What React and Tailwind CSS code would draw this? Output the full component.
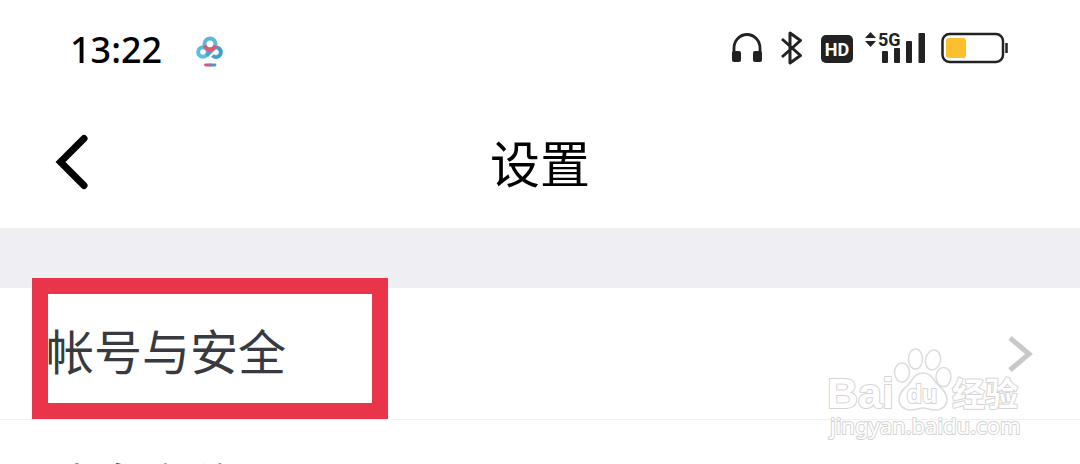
import React from "react";

const cjk = "font-['Roboto','Noto_Sans_CJK_SC',sans-serif]";

function CloudLogo() {
  return (
    <svg className="h-9 w-8" viewBox="0 0 32 36" fill="none" aria-hidden="true">
      <g strokeWidth="4">
        <circle cx="9" cy="20" r="4.800" stroke="#58bfdc" />
        <path d="M18.500 23.500a4.800 4.800 0 1 0 .500-7" stroke="#3c9fd0" />
        <path d="M12.500 23.500l7.500-7.500" stroke="#4ba3d2" />
        <circle cx="16" cy="12" r="5.500" stroke="#5cb9d6" />
        <path d="M10.700 13.500a5.500 5.500 0 0 0 10.600 0" stroke="#df5770" />
      </g>
      <path d="M11.500 33h5" stroke="#df5770" strokeWidth="2.800" strokeLinecap="round" />
      <path d="M16 33h5" stroke="#5593bd" strokeWidth="2.800" strokeLinecap="round" />
    </svg>
  );
}

function StatusIcons() {
  return (
    <svg className="h-10 w-[280px]" viewBox="730 28 280 40" fill="none" role="img" aria-label="HD 5G">
      <path d="M734 55v-7a13 13.500 0 0 1 26 0v7" stroke="#222" strokeWidth="2.800" />
      <rect x="732" y="51" width="9" height="11" rx="2" fill="#222" />
      <rect x="753" y="51" width="9" height="11" rx="2" fill="#222" />
      <path d="M782 39l18.500 16.500-10.500 7.500V33l10.500 7.500L782 57" stroke="#222" strokeWidth="3" strokeLinejoin="round" />
      <rect x="821" y="35" width="32" height="28" rx="5" fill="#222" />
      <text x="837" y="56" textAnchor="middle" fontFamily="Roboto, sans-serif" fontSize="18" fontWeight="700" fill="#fff">HD</text>
      <path d="M865 38l5.500-6 5.500 6zM865 41h11l-5.500 6z" fill="#222" />
      <text x="878" y="46" fontFamily="Roboto, sans-serif" fontSize="18" fontWeight="700" fill="#222">5G</text>
      <g fill="#222">
        <rect x="882" y="51" width="6" height="12" rx="1" />
        <rect x="894" y="48" width="6" height="15" rx="1" />
        <rect x="906" y="41" width="6" height="22" rx="1" />
        <rect x="918.500" y="33" width="6.500" height="30" rx="1" />
      </g>
      <rect x="942.500" y="34" width="60.500" height="28" rx="7" stroke="#222" strokeWidth="2.500" />
      <rect x="946" y="38" width="20" height="20" rx="3" fill="#fcc02f" />
      <path d="M1006.500 43v10" stroke="#222" strokeWidth="2.500" />
    </svg>
  );
}

function Watermark() {
  return (
    <svg className="pointer-events-none absolute top-[58px] right-[54px] h-[96px] w-[206px]" viewBox="820 346 206 96" role="img" aria-label="Baidu">
      <g fill="#fff" stroke="#dcdcdc" strokeWidth="1.500" strokeLinejoin="round">
        <ellipse cx="902" cy="372.500" rx="7.500" ry="9.500" />
        <ellipse cx="915.500" cy="359" rx="7" ry="10" />
        <ellipse cx="933" cy="360" rx="7.500" ry="10" transform="rotate(12 933 360)" />
        <ellipse cx="943.500" cy="377" rx="7.500" ry="9.500" />
        <path d="M923 373c-8 0-10 6-14 11-4 4-10 8-10 15 0 7 5 11 12 11 5 0 8-2 12-2s7 2 12 2c7 0 12-4 12-11 0-7-6-11-10-15-4-5-6-11-14-11z" />
      </g>
      <g fill="#fff" stroke="#d4d4d4" strokeWidth="2" strokeLinejoin="round" paintOrder="stroke">
        <text x="827" y="408" fontFamily="Liberation Sans, sans-serif" fontWeight="700" fontSize="43">Bai</text>
        <text x="922" y="403" textAnchor="middle" fontFamily="Liberation Sans, sans-serif" fontWeight="700" fontSize="25">du</text>
        <text x="952" y="406" fontFamily="Noto Sans CJK SC, sans-serif" fontWeight="700" fontSize="33">经验</text>
        <text x="830" y="434" fontFamily="Noto Sans, sans-serif" fontSize="22">jingyan.baidu.com</text>
      </g>
    </svg>
  );
}

export default function App() {
  return (
    <div className={`h-screen overflow-hidden bg-white text-black ${cjk}`}>
      <div className="flex h-24 items-center justify-between px-[70px]">
        <div className="flex items-center gap-8 pt-1">
          <time className="font-['Noto_Sans',sans-serif] text-4xl leading-none font-medium">13:22</time>
          <CloudLogo />
        </div>
        <StatusIcons />
      </div>
      <header className="grid h-[132px] grid-cols-[1fr_auto_1fr] items-center px-12">
        <button type="button" aria-label="返回" className="justify-self-start">
          <svg className="h-14 w-12" viewBox="48 133 48 56" fill="none" aria-hidden="true">
            <path d="M84 137.500L60.500 161l23.500 23.500" stroke="#000" strokeWidth="7" strokeLinecap="round" />
          </svg>
        </button>
        <h1 className="pt-2 text-[50px] leading-none">设置</h1>
      </header>
      <main>
        <div className="h-[60px] bg-[#efeef3]" />
        <section className="relative">
          <a href="#account" className="flex h-[132px] items-center justify-between border-b border-[#f0f0f0] px-[46px] text-[48px] leading-none text-[#393a40]">
            <span>帐号与安全</span>
            <svg className="h-10 w-7" viewBox="0 0 28 40" fill="none" aria-hidden="true">
              <path d="M4 4l19 16L4 36" stroke="#c8c8c8" strokeWidth="5" />
            </svg>
          </a>
          <div className="pointer-events-none absolute -top-[10px] left-8 h-[141px] w-[356px] border-[16px] border-[#e93449]" />
          <Watermark />
        </section>
        <a href="#messages" className="flex h-[136px] items-center px-[46px] text-[48px] leading-none text-[#393a40]">
          消息定位
        </a>
      </main>
    </div>
  );
}
